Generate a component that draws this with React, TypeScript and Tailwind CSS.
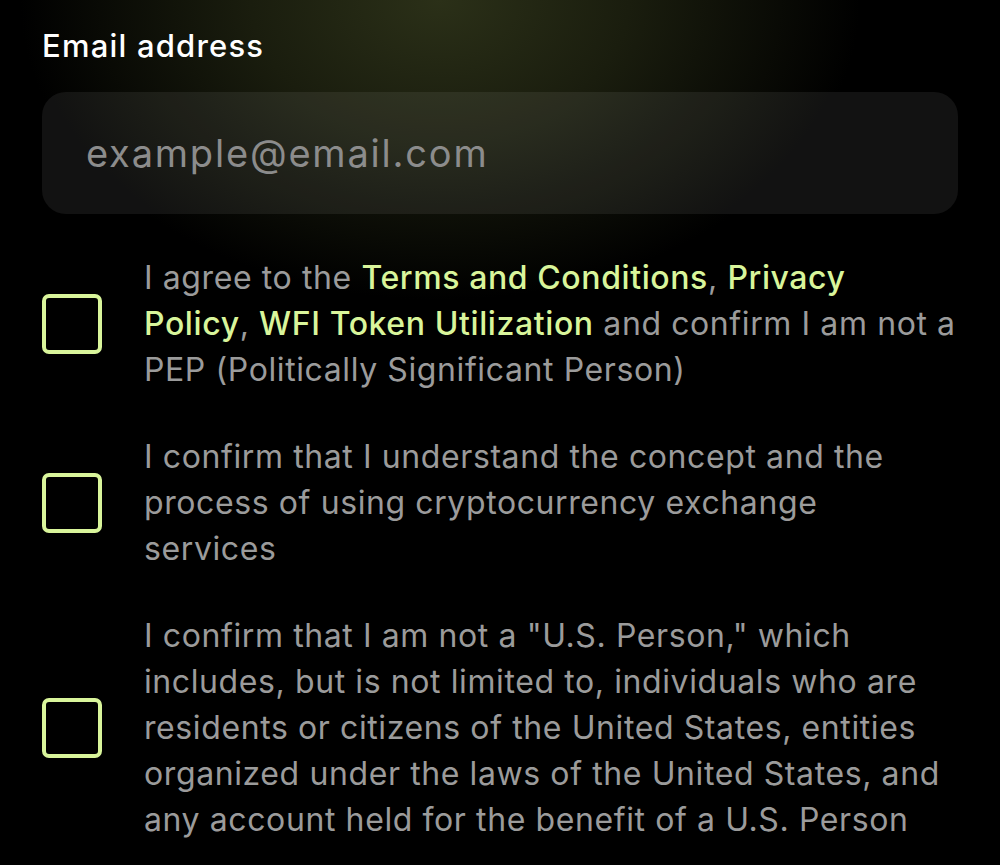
import React from 'react'

function Box() {
  return <div className="w-[60px] h-[60px] shrink-0 rounded-[7px] border-[4px] border-[#d9f59b]" />
}

function Item({ children }: { children: React.ReactNode }) {
  return (
    <label className="flex items-center gap-[42px]">
      <Box />
      <p className="w-[812px] text-[32px] leading-[46px] text-[#9b9b9b] tracking-[0.6px]">{children}</p>
    </label>
  )
}

function Em({ children }: { children: React.ReactNode }) {
  return <span className="text-[#d9f59b] font-medium">{children}</span>
}

export default function App(): JSX.Element {
  return (
    <div className="min-h-[865px] bg-black bg-[radial-gradient(ellipse_420px_300px_at_440px_0px,#2b3018_0%,#1a1d0e_45%,#000_100%)] px-[42px] pt-[28px] font-['Inter',sans-serif]">
      <div className="text-[31px] leading-[36px] text-white font-medium tracking-[1.2px]">Email address</div>
      <div className="mt-[28px] h-[122px] rounded-[24px] bg-[#ffffff12] flex items-center px-[44px]">
        <span className="text-[38px] text-[#8c8c8c] tracking-[1.8px]">example@email.com</span>
      </div>
      <div className="mt-[41px] flex flex-col gap-[41px]">
        <Item>
          I agree to the <Em>Terms and Conditions</Em>, <Em>Privacy Policy</Em>, <Em>WFI Token Utilization</Em> and
          confirm I am not a PEP (Politically Significant Person)
        </Item>
        <Item>I confirm that I understand the concept and the process of using cryptocurrency exchange services</Item>
        <Item>
          I confirm that I am not a "U.S. Person," which includes, but is not limited to, individuals who are residents
          or citizens of the United States, entities organized under the laws of the United States, and any account
          held for the benefit of a U.S. Person
        </Item>
      </div>
    </div>
  )
}
